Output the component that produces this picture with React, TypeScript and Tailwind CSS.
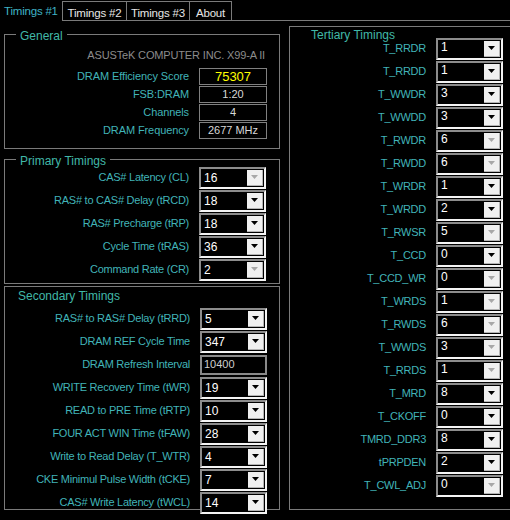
import React from 'react';

type Item = { label: string; value: string; off?: boolean };

const primary: Item[] = [
  { label: 'CAS# Latency (CL)', value: '16', off: true },
  { label: 'RAS# to CAS# Delay (tRCD)', value: '18' },
  { label: 'RAS# Precharge (tRP)', value: '18' },
  { label: 'Cycle Time (tRAS)', value: '36' },
  { label: 'Command Rate (CR)', value: '2', off: true },
];

const secondaryTop: Item[] = [
  { label: 'RAS# to RAS# Delay (tRRD)', value: '5' },
  { label: 'DRAM REF Cycle Time', value: '347' },
];

const secondaryBottom: Item[] = [
  { label: 'WRITE Recovery Time (tWR)', value: '19' },
  { label: 'READ to PRE Time (tRTP)', value: '10' },
  { label: 'FOUR ACT WIN Time (tFAW)', value: '28' },
  { label: 'Write to Read Delay (T_WTR)', value: '4' },
  { label: 'CKE Minimul Pulse Width (tCKE)', value: '7' },
  { label: 'CAS# Write Latency (tWCL)', value: '14' },
];

const tertiary: Item[] = [
  { label: 'T_RRDR', value: '1' },
  { label: 'T_RRDD', value: '1' },
  { label: 'T_WWDR', value: '3' },
  { label: 'T_WWDD', value: '3' },
  { label: 'T_RWDR', value: '6', off: true },
  { label: 'T_RWDD', value: '6', off: true },
  { label: 'T_WRDR', value: '1' },
  { label: 'T_WRDD', value: '2' },
  { label: 'T_RWSR', value: '5', off: true },
  { label: 'T_CCD', value: '0' },
  { label: 'T_CCD_WR', value: '0', off: true },
  { label: 'T_WRDS', value: '1', off: true },
  { label: 'T_RWDS', value: '6', off: true },
  { label: 'T_WWDS', value: '3', off: true },
  { label: 'T_RRDS', value: '1', off: true },
  { label: 'T_MRD', value: '8' },
  { label: 'T_CKOFF', value: '0' },
  { label: 'TMRD_DDR3', value: '8' },
  { label: 'tPRPDEN', value: '2' },
  { label: 'T_CWL_ADJ', value: '0', off: true },
];

const general = [
  { label: 'DRAM Efficiency Score', value: '75307', yellow: true },
  { label: 'FSB:DRAM', value: '1:20' },
  { label: 'Channels', value: '4' },
  { label: 'DRAM Frequency', value: '2677 MHz' },
];

const tabs = [
  { name: 'Timings #2', w: 'w-[65px]' },
  { name: 'Timings #3', w: 'w-[63px]' },
  { name: 'About', w: 'w-[42px]' },
];

const Combo: React.FC<{ value: string; off?: boolean; high?: boolean }> = ({ value, off, high }) => (
  <div className="w-[67px] h-[22px] flex border-2 border-t-[#8c8c8c] border-l-[#8c8c8c] border-b-[#f4f4f4] border-r-[#f4f4f4] bg-black">
    <div className={`flex-1 flex items-center pl-[3px] text-white text-[12px] ${high ? 'pb-[4px]' : 'pt-[1px]'}`}>
      {value}
    </div>
    <div className="w-[16px] my-[1px] mr-[1px] bg-[#f0f0f0] border-r border-b border-[#b4b4b4] flex items-center justify-center">
      <svg width="7" height="4" viewBox="0 0 7 4">
        <path d="M0 0h7L3.5 4z" fill={off ? '#a8a8a8' : '#000'} />
      </svg>
    </div>
  </div>
);

const Row: React.FC<{ item: Item; labelW: string; high?: boolean }> = ({ item, labelW, high }) => (
  <div className="flex items-center h-[23px]">
    <span className={`${labelW} shrink-0 text-right pr-[10px] text-[#41b4b8] text-[11px] tracking-[-0.25px] whitespace-nowrap`}>
      {item.label}
    </span>
    <Combo value={item.value} off={item.off} high={high} />
  </div>
);

export default function App() {
  return (
    <div
      className="w-[510px] h-[520px] bg-black overflow-hidden"
      style={{ fontFamily: '"Liberation Sans", Arial, sans-serif' }}
    >
      {/* tab strip */}
      <div className="flex h-[21px]">
        <div className="w-[62px] shrink-0 pl-[4px] pt-[3px] text-[11.5px] tracking-[-0.2px] text-[#3fb3c6] whitespace-nowrap">
          Timings #1
        </div>
        <div className="flex-1 flex border-b border-[#7a7a7a] pt-[1px]">
          {tabs.map((t, i) => (
            <div
              key={t.name}
              className={`${t.w} h-[19px] pt-[3px] text-center text-[11.5px] tracking-[-0.2px] text-[#e6e6e6] whitespace-nowrap border-t border-r border-[#7a7a7a] ${i === 0 ? 'border-l' : ''}`}
            >
              {t.name}
            </div>
          ))}
        </div>
      </div>

      <div className="flex items-start">
        {/* left column */}
        <div className="ml-[4px] w-[276px] shrink-0 mt-[13px]">
          <div className="relative h-[115px] border border-[#7a7a7a]">
            <span className="absolute -top-[8px] left-[11px] bg-black px-[4px] text-[12px] text-[#40b8a8]">General</span>
            <div className="pt-[13px] pr-[14px] text-right text-[11px] tracking-[-0.15px] text-[#8c8c8c] leading-[14px]">
              ASUSTeK COMPUTER INC. X99-A II
            </div>
            <div className="mt-[6px] flex flex-col gap-[1px]">
              {general.map(g => (
                <div key={g.label} className="flex items-center h-[17px]">
                  <span className="w-[194px] shrink-0 text-right pr-[10px] text-[11px] tracking-[-0.1px] text-[#41b4b8]">{g.label}</span>
                  <div
                    className={`w-[68px] h-[17px] border border-[#808080] flex items-center justify-center ${g.yellow ? 'text-[#ffff00] text-[13px]' : 'text-[#d8d8d8] text-[11px]'}`}
                  >
                    {g.value}
                  </div>
                </div>
              ))}
            </div>
          </div>

          <div className="relative mt-[10px] h-[125px] border border-[#7a7a7a] pt-[6px]">
            <span className="absolute -top-[8px] left-[11px] bg-black px-[4px] text-[12px] text-[#40b8a8]">Primary Timings</span>
            {primary.map(p => (
              <Row key={p.label} item={p} labelW="w-[194px]" />
            ))}
          </div>

          <div className="mt-[2px] h-[224px] border border-[#7a7a7a]">
            <div className="pl-[13px] pt-[2px] text-[12px] leading-[14px] text-[#40b8a8]">Secondary Timings</div>
            <div className="mt-[4px]">
              {secondaryTop.map(p => (
                <Row key={p.label} item={p} labelW="w-[195px]" />
              ))}
              <div className="flex items-center h-[23px]">
                <span className="w-[195px] shrink-0 text-right pr-[10px] text-[#41b4b8] text-[11px] tracking-[-0.25px]">
                  DRAM Refresh Interval
                </span>
                <div className="w-[67px] h-[20px] border-2 border-[#8a8a8a] flex items-center pl-[2px] text-[11px] text-[#cfcfcf]">
                  10400
                </div>
              </div>
              {secondaryBottom.map(p => (
                <Row key={p.label} item={p} labelW="w-[195px]" />
              ))}
            </div>
          </div>
        </div>

        {/* right column */}
        <div className="ml-[9px] mt-[5px] w-[230px] h-[484px] border border-[#7a7a7a] shrink-0">
          <div className="h-[10px] pl-[21px] pt-[1px] text-[12px] leading-[14px] text-[#40b8a8] whitespace-nowrap">
            Tertiary Timings
          </div>
          {tertiary.map(t => (
            <Row key={t.label} item={t} labelW="w-[146px]" high />
          ))}
        </div>
      </div>
    </div>
  );
}
